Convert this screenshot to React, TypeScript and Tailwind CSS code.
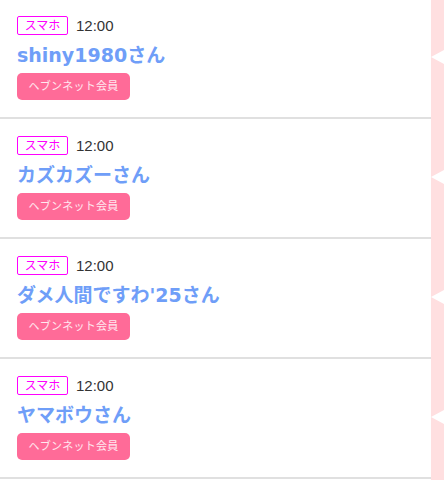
import React from "react";

const items = ["shiny1980さん", "カズカズーさん", "ダメ人間ですわ'25さん", "ヤマボウさん"];

export default function App() {
  return (
    <div
      className="w-[444px] h-[480px] overflow-hidden bg-white"
      style={{ fontFamily: '"Liberation Sans", "Noto Sans CJK JP", sans-serif' }}
    >
      {items.map((name, i) => (
        <div key={i} className="flex h-[120px]">
          <div className="flex-1 h-[119px] border-b-2 border-[#e0e0e0] pl-[17px] pt-[16px]">
            <div className="flex items-center gap-[8px] h-[19px]">
              <span className="h-[19px] w-[51px] border border-[#ff00ff] rounded-[2px] flex items-center justify-center text-[12px] leading-none text-[#ff00ff]">
                スマホ
              </span>
              <span className="text-[15px] leading-none text-[#333333]">12:00</span>
            </div>
            <div
              className="mt-[4px] h-[32px] flex items-center text-[19px] font-bold leading-none text-[#6f9ef8]"
              style={{ fontFamily: '"DejaVu Sans", "Noto Sans CJK JP", sans-serif' }}
            >
              {name}
            </div>
            <div className="mt-[2px] h-[27px] w-[113px] rounded-[5px] bg-[#ff6b98] flex items-center justify-center text-[11px] tracking-[0.25px] leading-none text-white/85">
              ヘブンネット会員
            </div>
          </div>
          <div className="w-[13px] h-[120px] bg-[#ffdfe0] pt-[50px]">
            <svg width="13" height="14" viewBox="0 0 13 14" className="block">
              <polygon points="0,7 13,0 13,14" fill="#ffffff" />
            </svg>
          </div>
        </div>
      ))}
    </div>
  );
}
